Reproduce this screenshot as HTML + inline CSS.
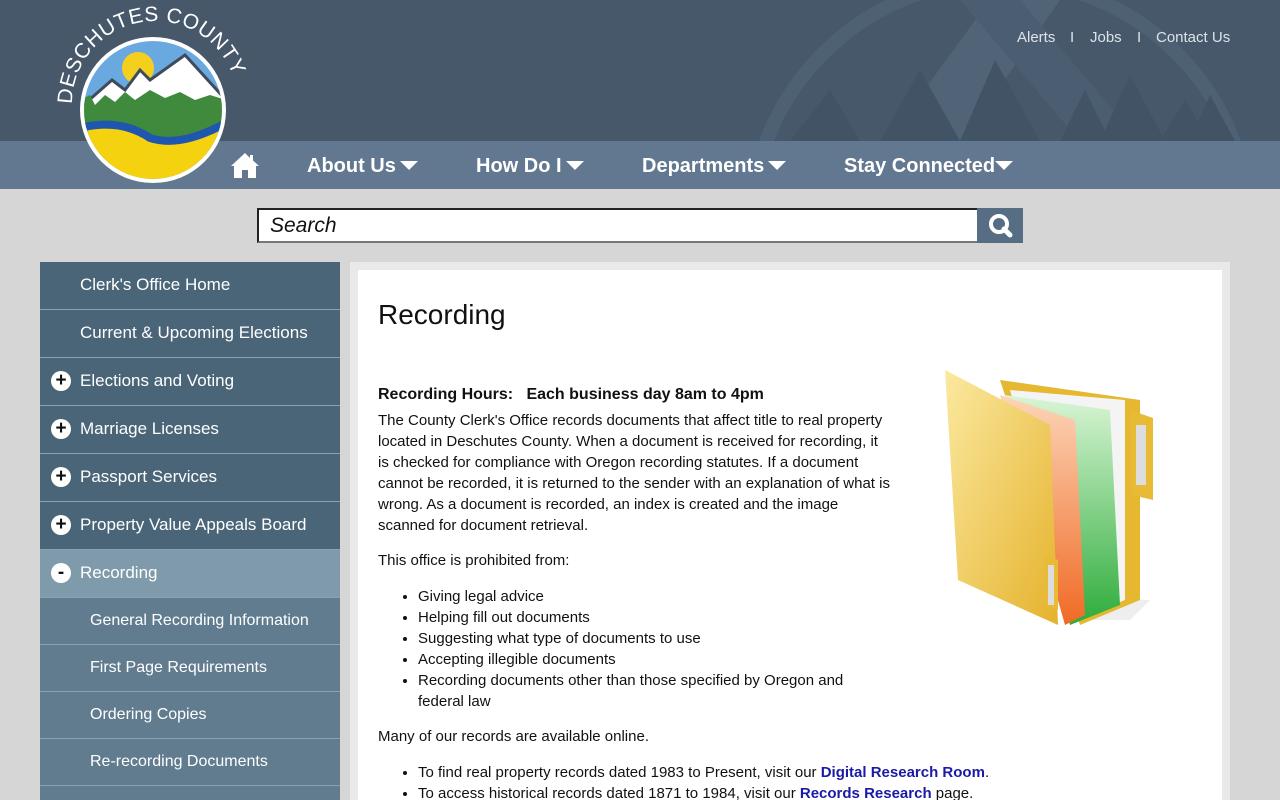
<!DOCTYPE html>
<html><head><meta charset="utf-8"><style>
*{margin:0;padding:0;box-sizing:border-box}
html,body{width:1280px;height:800px;overflow:hidden}
body{background:#d6d6d6;font-family:"Liberation Sans",Arial,sans-serif;position:relative}
.hdr{position:absolute;left:0;top:0;width:1280px;height:141px;background:#46586a;overflow:hidden}
.nav{position:absolute;left:0;top:141px;width:1280px;height:48px;background:#627790}
.nav a{position:absolute;top:14px;color:#fff;font-weight:bold;font-size:20px;text-decoration:none}
.tri{display:inline-block;width:0;height:0;border-left:9px solid transparent;border-right:9px solid transparent;border-top:9px solid #fff;margin-left:4px;vertical-align:2px}
.top{position:absolute;top:29px;color:#dde3ea;font-size:15px}
.search{position:absolute;left:257px;top:208px;width:722px;height:35px;background:#fff;border:2px solid #222;border-bottom-color:#777;border-right:none;font-size:21px;font-style:italic;padding:4px 0 0 11px;color:#111}
.sbtn{position:absolute;left:977px;top:208px;width:46px;height:35px;background:#566d84}
.side{position:absolute;left:40px;top:262px;width:300px;height:540px;overflow:hidden}
.side div{height:48px;border-bottom:1px solid #8aa0b3;color:#fff;font-size:17px;padding-left:40px;line-height:46px;background:#4a6478;position:relative}
.side div.act{background:#7f9aab}
.side div.sub{background:#617b8f;padding-left:50px;height:47px;font-size:16px}
.side i{position:absolute;left:11px;top:13px;width:20px;height:20px;border-radius:50%;background:#fff;color:#111;font-style:normal;font-weight:bold;font-size:19px;line-height:20px;text-align:center}
.box{position:absolute;left:350px;top:262px;width:880px;height:560px;background:#e9e9e9}
.inner{position:absolute;left:358px;top:270px;width:864px;height:540px;background:#fff}
.c{position:absolute;left:378px;font-size:15px;color:#111;line-height:21px}
ul{list-style:disc;padding-left:40px}
a.l{color:#1a1aa6;font-weight:bold;text-decoration:none}
</style></head><body>
<div class="hdr">
<svg width="1280" height="141" style="position:absolute;left:0;top:0">
<circle cx="1000" cy="230" r="250" fill="none" stroke="#4e6073" stroke-width="14"/>
<path d="M800 260 L990 0 L1060 0 L880 260Z" fill="#516477"/>
<path d="M960 0 L1180 260 L1240 260 L1020 0Z" fill="#4b5d70"/>
<path d="M790 141 L830 90 L860 141Z M880 141 L920 70 L960 141Z M960 141 L995 60 L1040 141Z M1060 141 L1085 90 L1110 141Z M1100 141 L1130 75 L1165 141Z M1160 141 L1185 100 L1210 141Z M1190 141 L1210 95 L1235 141Z" fill="#415365"/>
</svg>
</div>
<span class="top" style="left:1017px">Alerts</span>
<span class="top" style="left:1070px">I</span>
<span class="top" style="left:1090px">Jobs</span>
<span class="top" style="left:1137px">I</span>
<span class="top" style="left:1156px">Contact Us</span>
<div class="nav">
<svg style="position:absolute;left:229px;top:10px" width="32" height="28" viewBox="0 0 32 28"><path d="M16 2 L2 15 L5 15 L5 27 L13 27 L13 19 L19 19 L19 27 L27 27 L27 15 L30 15 L24 9.5 L24 4 L21 4 L21 7 Z" fill="#fff"/></svg>
<a style="left:307px">About Us<span class="tri"></span></a>
<a style="left:476px">How Do I<span class="tri"></span></a>
<a style="left:642px">Departments<span class="tri"></span></a>
<a style="left:844px">Stay Connected<span class="tri" style="margin-left:0"></span></a>
</div>
<svg style="position:absolute;left:45px;top:0px" width="220" height="190" viewBox="45 0 220 190">
<defs><clipPath id="cc"><circle cx="153" cy="110" r="69"/></clipPath><path id="arc" d="M72 104 A83 83 0 0 1 238 104"/></defs>
<circle cx="153" cy="110" r="73" fill="#fff"/>
<g clip-path="url(#cc)">
<rect x="80" y="30" width="150" height="160" fill="#6aa9e0"/>
<circle cx="138" cy="68" r="16" fill="#f5cf1e"/>
<path d="M80 108 L112 80 L125 90 L140 70 L150 80 L185 55 L226 100 L226 130 L80 130Z" fill="#fff" stroke="#3d4c5c" stroke-width="3"/>
<path d="M80 100 L90 95 L95 105 L105 95 L115 102 L125 92 L135 100 L150 90 L165 98 L180 92 L195 100 L210 95 L226 100 L226 140 L80 140Z" fill="#3f8a3c"/>
<path d="M80 130 Q120 120 150 140 Q180 150 226 125 L226 190 L80 190Z" fill="#f5d210"/>
<path d="M80 128 Q120 118 150 138 Q180 148 226 123" fill="none" stroke="#1e56b0" stroke-width="8"/>
</g>
<text font-family="Liberation Sans,sans-serif" font-size="21" fill="#fff" letter-spacing="0.5"><textPath href="#arc">DESCHUTES COUNTY</textPath></text>
</svg>
<div class="search">Search</div>
<div class="sbtn"><svg width="46" height="35"><circle cx="22" cy="16" r="8" fill="none" stroke="#fff" stroke-width="4"/><path d="M27 21 L33 27" stroke="#fff" stroke-width="5" stroke-linecap="round"/></svg></div>
<div class="side">
<div>Clerk's Office Home</div>
<div>Current &amp; Upcoming Elections</div>
<div><i>+</i>Elections and Voting</div>
<div><i>+</i>Marriage Licenses</div>
<div><i>+</i>Passport Services</div>
<div><i>+</i>Property Value Appeals Board</div>
<div class="act"><i>-</i>Recording</div>
<div class="sub">General Recording Information</div>
<div class="sub">First Page Requirements</div>
<div class="sub">Ordering Copies</div>
<div class="sub">Re-recording Documents</div>
<div class="sub"></div>
</div>
<div class="box"></div><div class="inner"></div>
<div class="c" style="top:299px;font-size:28px;line-height:32px">Recording</div>
<div class="c" style="top:384px;font-weight:bold;font-size:16px">Recording Hours:&nbsp;&nbsp; Each business day 8am to 4pm</div>
<div class="c" style="top:410px;width:512px">The County Clerk's Office records documents that affect title to real property located in Deschutes County. When a document is received for recording, it is checked for compliance with Oregon recording statutes. If a document cannot be recorded, it is returned to the sender with an explanation of what is wrong. As a document is recorded, an index is created and the image scanned for document retrieval.</div>
<div class="c" style="top:550px">This office is prohibited from:</div>
<div class="c" style="top:586px;width:480px"><ul><li>Giving legal advice</li><li>Helping fill out documents</li><li>Suggesting what type of documents to use</li><li>Accepting illegible documents</li><li>Recording documents other than those specified by Oregon and federal law</li></ul></div>
<div class="c" style="top:726px">Many of our records are available online.</div>
<div class="c" style="top:762px;width:700px"><ul><li>To find real property records dated 1983 to Present, visit our <a class="l">Digital Research Room</a>.</li><li>To access historical records dated 1871 to 1984, visit our <a class="l">Records Research</a> page.</li></ul></div>
<svg style="position:absolute;left:900px;top:350px" width="300" height="300" viewBox="0 0 300 300">
<defs><linearGradient id="y" x1="0" x2="1" y1="0" y2="1"><stop offset="0" stop-color="#fbe9a0"/><stop offset="1" stop-color="#e5b22c"/></linearGradient>
<linearGradient id="o" x1="0" y1="0" x2="0" y2="1"><stop offset="0" stop-color="#fcd5b8"/><stop offset="1" stop-color="#f06a25"/></linearGradient>
<linearGradient id="g" x1="0" y1="0" x2="0" y2="1"><stop offset="0" stop-color="#d9f5d5"/><stop offset="1" stop-color="#2eac3b"/></linearGradient></defs>
<path d="M160 245 L250 250 L230 270 L170 270Z" fill="#eee"/>
<path d="M100 30 L240 50 L240 250 L180 275 Z" fill="#e5b830"/>
<path d="M110 40 L225 50 L225 250 L175 270Z" fill="#f4f4f4"/>
<path d="M105 45 L210 60 L220 255 L170 275Z" fill="url(#g)"/>
<path d="M100 45 L175 70 L185 265 L165 275Z" fill="url(#o)"/>
<path d="M230 60 L253 68 L253 150 L232 145Z" fill="#e7bb36"/><rect x="236" y="75" width="10" height="60" fill="#ddd"/>
<path d="M45 20 L150 75 L158 275 L58 230 Z" fill="url(#y)"/>
<path d="M145 205 L158 210 L158 260 L145 255Z" fill="#e7bb36"/><rect x="148" y="215" width="6" height="40" fill="#ddd"/>
</svg>
</body></html>
